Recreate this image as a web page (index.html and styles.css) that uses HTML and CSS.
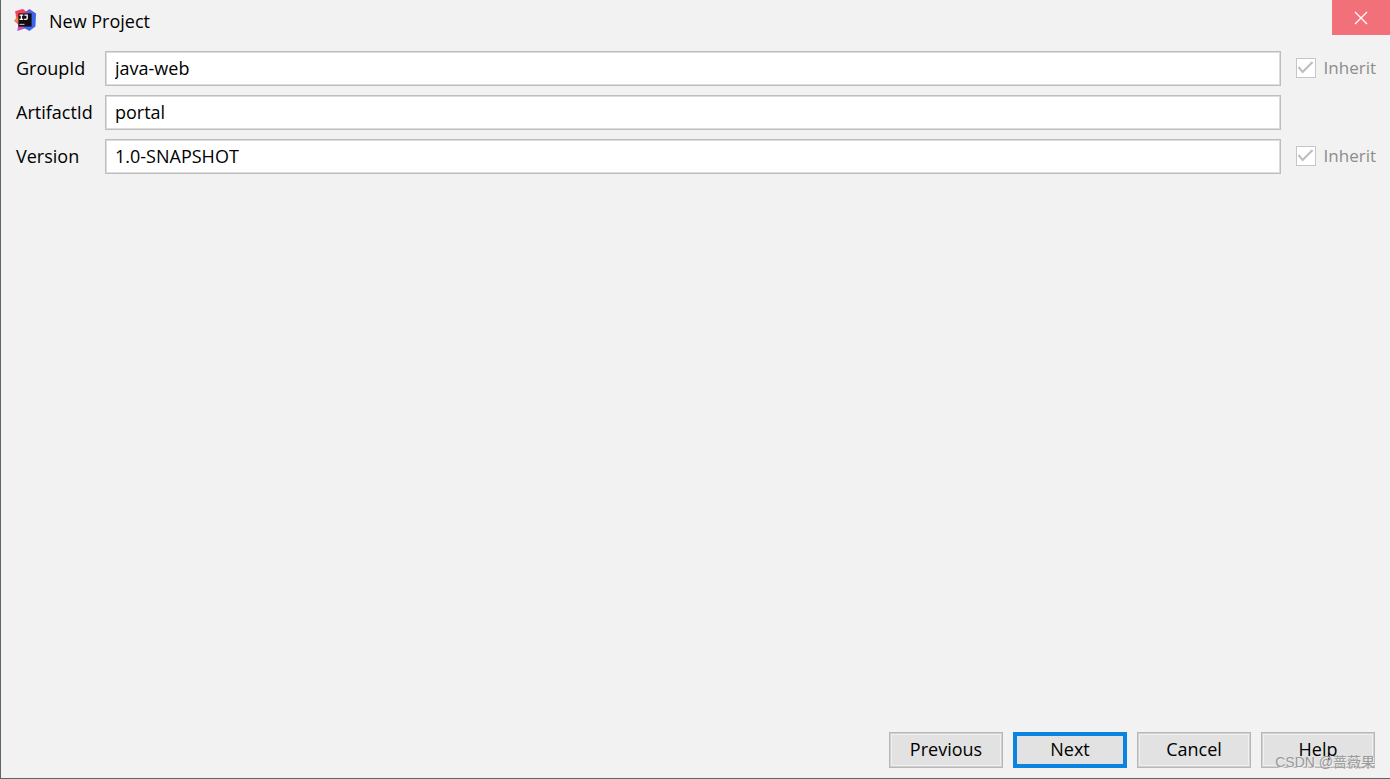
FILE: index.html
```html
<!DOCTYPE html>
<html lang="en">
<head>
<meta charset="utf-8">
<title>New Project</title>
<link rel="stylesheet" href="styles.css">
</head>
<body>
<div class="dialog">
  <header class="titlebar">
    <svg class="logo" viewBox="0 0 20 20" aria-hidden="true">
      <defs>
        <linearGradient id="warm" x1="0" y1="0" x2="0" y2="1">
          <stop offset="0" stop-color="#fe315d"/>
          <stop offset=".3" stop-color="#fb4a50"/>
          <stop offset=".5" stop-color="#f58b3c"/>
          <stop offset=".7" stop-color="#e2528c"/>
          <stop offset="1" stop-color="#b04fd8"/>
        </linearGradient>
        <linearGradient id="cool" x1="0" y1="0" x2="1" y2="1">
          <stop offset="0" stop-color="#8a4fc0"/>
          <stop offset=".5" stop-color="#3b66ea"/>
          <stop offset="1" stop-color="#3f63f0"/>
        </linearGradient>
      </defs>
      <path fill="url(#warm)" d="M1 2 8 0l4 3v14l-9 3 1-6-4-3 2-3z"/>
      <path fill="url(#cool)" d="M10 3 14 0 20 4l-.5 12-5.500 4-5-3z"/>
      <path fill="#120c10" d="M4 4h12v12H4z"/>
      <path fill="none" stroke="#fff" stroke-width="1.200" d="M5 5.500h3.400M6.700 5.500v4M5 9.500h3.400M9.500 5.500h2.500v3q0 1-1 1H9.200"/>
      <path fill="#bbb" d="M5 13.500h4.500v1H5z"/>
    </svg>
    <h1 class="title">New Project</h1>
    <button class="close" type="button" aria-label="Close">
      <svg class="close-icon" viewBox="0 0 14 14" aria-hidden="true"><path d="m1 1 12 12M13 1 1 13"/></svg>
    </button>
  </header>
  <form class="content">
    <div class="fields">
      <label class="label" for="group">GroupId</label>
      <input class="field" id="group" type="text" value="java-web">
      <label class="inherit"><input class="check" type="checkbox" checked disabled>Inherit</label>
      <label class="label" for="artifact">ArtifactId</label>
      <input class="field" id="artifact" type="text" value="portal">
      <span></span>
      <label class="label" for="version">Version</label>
      <input class="field" id="version" type="text" value="1.0-SNAPSHOT">
      <label class="inherit"><input class="check" type="checkbox" checked disabled>Inherit</label>
    </div>
    <footer class="actions">
      <button class="button" type="button">Previous</button>
      <button class="button primary" type="submit">Next</button>
      <button class="button" type="button">Cancel</button>
      <button class="button" type="button">Help</button>
    </footer>
  </form>
  <div class="watermark">CSDN @蔷薇果</div>
</div>
</body>
</html>
```
FILE: styles.css
```css
* {
  box-sizing: border-box;
}

body {
  margin: 0;
  font: 18px/24px "Open Sans", "Noto Sans CJK SC", sans-serif;
  color: #000;
}

.dialog {
  position: relative;
  display: flex;
  flex-direction: column;
  min-height: 100vh;
  background: #f2f2f2;
  border-left: 1px solid #5c6663;
  border-bottom: 1px solid #5c6663;
}

.titlebar {
  display: flex;
  align-items: flex-start;
  padding-left: 13px;
}

.logo {
  width: 22px;
  height: 22px;
  margin-top: 9px;
}

.title {
  flex: 1;
  margin: 9px 0 0 13px;
  font-size: 18px;
  font-weight: 400;
}

.close {
  display: flex;
  align-items: center;
  justify-content: center;
  width: 58px;
  height: 35px;
  padding: 0;
  border: 0;
  background: #f2707a;
}

.close-icon {
  width: 14px;
  height: 14px;
  fill: none;
  stroke: #fff;
  stroke-width: 1.3;
}

.content {
  display: flex;
  flex: 1;
  flex-direction: column;
  justify-content: space-between;
  padding: 16px 14px 10px 15px;
}

.fields {
  display: grid;
  grid-template-columns: 89px 1fr auto;
  row-gap: 9px;
  align-items: center;
}

.label {
  padding-bottom: 2px;
}

.field {
  width: 100%;
  height: 35px;
  padding: 0 9px 2px;
  border: 1px solid #bebebe;
  border-radius: 0;
  background: #fff;
  box-shadow: inset 0 0 0 1px #dcdcdc;
  font: inherit;
  color: #000;
}

.inherit {
  display: flex;
  align-items: center;
  gap: 8px;
  margin-left: 15px;
  padding-bottom: 2px;
  font-size: 17px;
  color: #8c8c8c;
}

.check {
  appearance: none;
  width: 20px;
  height: 20px;
  margin: 0;
  border: 1px solid #c6c6c6;
  background: #fff;
  display: grid;
  place-items: center;
}

.check::before {
  content: "";
  width: 16px;
  height: 14px;
  background: #bdbdbd;
  clip-path: polygon(0 7px, 2px 6px, 5px 10px, 14px 1px, 16px 2px, 5px 13px);
}

.actions {
  display: flex;
  justify-content: flex-end;
  gap: 10px;
  padding-right: 1px;
}

.button {
  width: 114px;
  height: 36px;
  padding: 0 0 2px;
  border: 1px solid #b8b8b8;
  background: #e2e2e2;
  box-shadow: inset 0 0 0 1px #d0d0d0, inset 0 0 0 2px #f0f0f0;
  font: inherit;
  color: #000;
}

.primary {
  border: 4px solid #0a84e0;
  box-shadow: none;
}

.watermark {
  position: absolute;
  right: 15px;
  bottom: 4px;
  font: 14px/24px "Liberation Sans", "Noto Sans CJK SC", sans-serif;
  color: #999;
  text-shadow: 1px 1px 0 #eee;
  pointer-events: none;
}
```
